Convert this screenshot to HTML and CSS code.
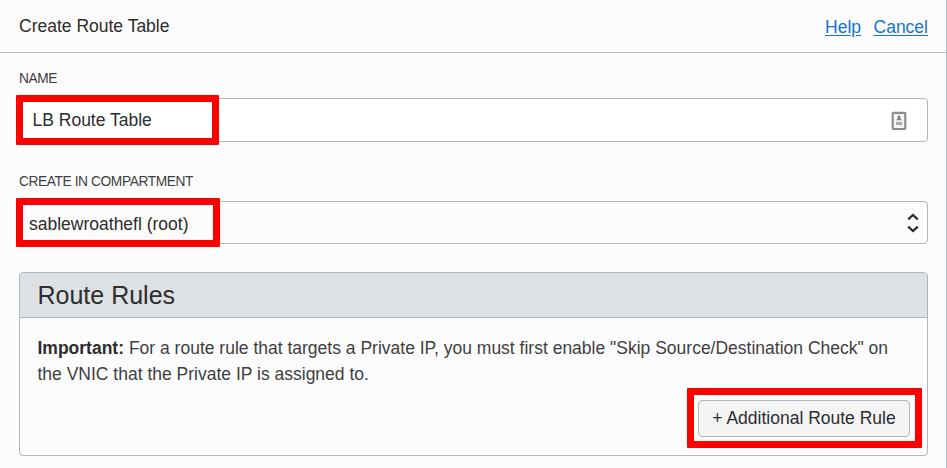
FILE: index.html
```html
<!DOCTYPE html>
<html lang="en">
<head>
<meta charset="utf-8">
<title>Create Route Table</title>
<link rel="stylesheet" href="styles.css">
</head>
<body>
<main class="dialog">
  <header class="dialog-header">
    <h1 class="title">Create Route Table</h1>
    <nav class="links"><a href="#">Help</a><a href="#">Cancel</a></nav>
  </header>
  <form class="form">
    <div class="label">NAME</div>
    <div class="field name-field">
      <span class="value">LB Route Table</span>
      <svg class="contact-icon" width="16" height="20" viewBox="0 0 16 20">
        <rect x="1.7" y="1.8" width="12.6" height="16.2" rx="0.8" fill="#f8f8f8" stroke="#8d8d8d" stroke-width="2.2"/>
        <path d="M8 4.600a1.600 1.600 0 0 1 1.200 2.600l1.900 2.100H4.900l1.900-2.100A1.600 1.600 0 0 1 8 4.600z" fill="#808080"/>
        <path d="M4.900 10.900h6.200v3.200H4.900z" fill="#aaa"/>
      </svg>
      <i class="highlight highlight-name"></i>
    </div>
    <div class="label label-compartment">CREATE IN COMPARTMENT</div>
    <div class="field select-field">
      <span class="value">sablewroathefl (root)</span>
      <svg class="chevrons" width="12" height="20" viewBox="0 0 12 20" fill="none" stroke="#2b2b2b" stroke-width="2.200">
        <path d="M1.200 6.400 6 2l4.800 4.400M1.200 13.600 6 18l4.800-4.400"/>
      </svg>
      <i class="highlight highlight-compartment"></i>
    </div>
    <section class="panel">
      <h2 class="panel-title">Route Rules</h2>
      <div class="panel-body">
        <p class="note"><strong>Important:</strong> For a route rule that targets a Private IP, you must first enable "Skip Source/Destination Check" on<br>the VNIC that the Private IP is assigned to.</p>
        <div class="actions">
          <div class="button-wrap">
            <button type="button" class="button">+ Additional Route Rule</button>
            <i class="highlight highlight-button"></i>
          </div>
        </div>
      </div>
    </section>
  </form>
</main>
</body>
</html>
```
FILE: styles.css
```css
* { box-sizing: border-box; }
body {
  margin: 0;
  background: #fcfcfc;
  color: #2d2d2d;
  font-family: "Liberation Sans", Arial, sans-serif;
  font-size: 17.5px;
}
.dialog {
  height: 468px;
  overflow: hidden;
  border-right: 1px solid #b0b7c1;
}
.dialog-header {
  height: 53px;
  padding: 0 18px 0 19px;
  display: flex;
  align-items: center;
  justify-content: space-between;
  border-bottom: 1px solid #b0b7c1;
}
.title { margin: 0; font-size: 17.5px; font-weight: 400; }
.links { display: flex; gap: 12.5px; padding-top: 2px; }
.links a { color: #1376cd; text-decoration: underline; text-underline-offset: 2px; }
.form { padding: 18px 18px 0 19px; }
.label { height: 27px; line-height: 16px; font-size: 13.75px; letter-spacing: -0.41px; color: #3f3f3f; }
.label-compartment { margin-top: 32px; height: 27px; }
.field {
  position: relative;
  display: flex;
  align-items: center;
  justify-content: space-between;
  border: 1px solid #b0b7c1;
  border-radius: 4px;
}
.name-field { height: 44px; padding: 0 20px 0 12.5px; background: #fff; }
.name-field .contact-icon { margin-top: 1px; }
.select-field { height: 43px; padding: 0 8.500px 0 9px; }
.select-field .value { padding-top: 3px; }
.highlight { position: absolute; border: 7px solid #f00; border-radius: 1px; pointer-events: none; }
.highlight-name { left: -4px; top: -4px; width: 203px; height: 50px; }
.highlight-compartment { left: -4px; top: -4px; width: 204px; height: 49px; }
.highlight-button { left: -11px; top: -12px; width: 235px; height: 60px; }
.panel { margin-top: 28px; height: 184px; border: 1px solid #b0b7c1; border-radius: 4px; overflow: hidden; }
.panel-title {
  margin: 0;
  height: 45px;
  padding-left: 17.5px;
  line-height: 45px;
  font-size: 25px;
  font-weight: 400;
  background: #dde1e4;
  border-bottom: 1px solid #b0b7c1;
}
.panel-body { padding: 17px 17px 0 17.5px; }
.note { margin: 0; line-height: 26px; white-space: nowrap; color: #3f3f3f; }
.note strong { color: #2d2d2d; }
.actions { display: flex; justify-content: flex-end; margin-top: 13px; }
.button-wrap { position: relative; }
.button {
  display: block;
  width: 212px;
  height: 37px;
  padding: 0;
  border: 1px solid #b0b7c1;
  border-radius: 4px;
  background: #f4f4f5;
  color: #2d2d2d;
  font: inherit;
}
```
